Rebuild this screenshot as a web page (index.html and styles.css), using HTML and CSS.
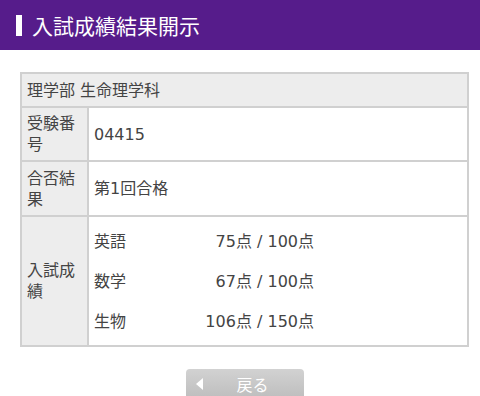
FILE: index.html
```html
<!DOCTYPE html>
<html lang="ja">
<head>
  <meta charset="UTF-8" />
  <meta name="viewport" content="width=device-width, initial-scale=1.0" />
  <title>入試成績結果開示</title>
  <link rel="stylesheet" href="styles.css">
</head>
<body>
  <header class="page-title">
    <span class="title-bar"></span>
    <h1>入試成績結果開示</h1>
  </header>

  <div class="content">
    <table class="result">
      <tr>
        <th colspan="2" class="dept">理学部 生命理学科</th>
      </tr>
      <tr class="row-num">
        <th>受験番号</th>
        <td>04415</td>
      </tr>
      <tr class="row-pass">
        <th>合否結果</th>
        <td>第1回合格</td>
      </tr>
      <tr class="row-score">
        <th>入試成績</th>
        <td>
          <div class="scores">
            <span>英語</span><span class="pt">75点 / 100点</span>
            <span>数学</span><span class="pt">67点 / 100点</span>
            <span>生物</span><span class="pt">106点 / 150点</span>
          </div>
        </td>
      </tr>
    </table>

    <div class="actions">
      <button class="back-btn"><span class="arrow"></span>戻る</button>
    </div>
  </div>
</body>
</html>
```

FILE: styles.css
```css
* {
  box-sizing: border-box;
}

body {
  margin: 0;
  font-family: "DejaVu Sans", "Noto Sans CJK JP", sans-serif;
  color: #444;
  background: #fff;
}

.page-title {
  height: 50px;
  background: #561c8b;
  display: flex;
  align-items: center;
  padding-left: 16px;
  gap: 10px;
}

.title-bar {
  width: 6px;
  height: 21px;
  background: #fff;
}

.page-title h1 {
  margin: 0;
  font-size: 21px;
  font-weight: normal;
  color: #fff;
}

.content {
  padding: 22px 11px 0 20px;
}

.result {
  width: 100%;
  border-collapse: collapse;
  border: 2px solid #d0d0d0;
  font-size: 16px;
}

.result th,
.result td {
  border: 2px solid #d0d0d0;
  text-align: left;
  font-weight: normal;
  padding: 0 5px;
  line-height: 21px;
}

.result th {
  background: #ededed;
  width: 67px;
}

.result .dept {
  height: 34px;
  width: auto;
}

.row-num {
  height: 54px;
}

.row-pass {
  height: 55px;
}

.row-score {
  height: 130px;
}

.scores {
  display: grid;
  grid-template-columns: 60px 160px;
  grid-auto-rows: 40px;
  align-items: center;
}

.scores .pt {
  text-align: right;
}

.actions {
  display: flex;
  justify-content: center;
  margin-top: 22px;
}

.back-btn {
  width: 118px;
  height: 36px;
  border: none;
  border-radius: 4px;
  background: linear-gradient(#d2d2d2, #b9b9b9);
  color: #fff;
  font-family: inherit;
  font-size: 16px;
  display: flex;
  align-items: center;
  padding: 0 0 6px 10px;
  gap: 34px;
}

.arrow {
  width: 0;
  height: 0;
  border-top: 6px solid transparent;
  border-bottom: 6px solid transparent;
  border-right: 7px solid #fff;
}
```
